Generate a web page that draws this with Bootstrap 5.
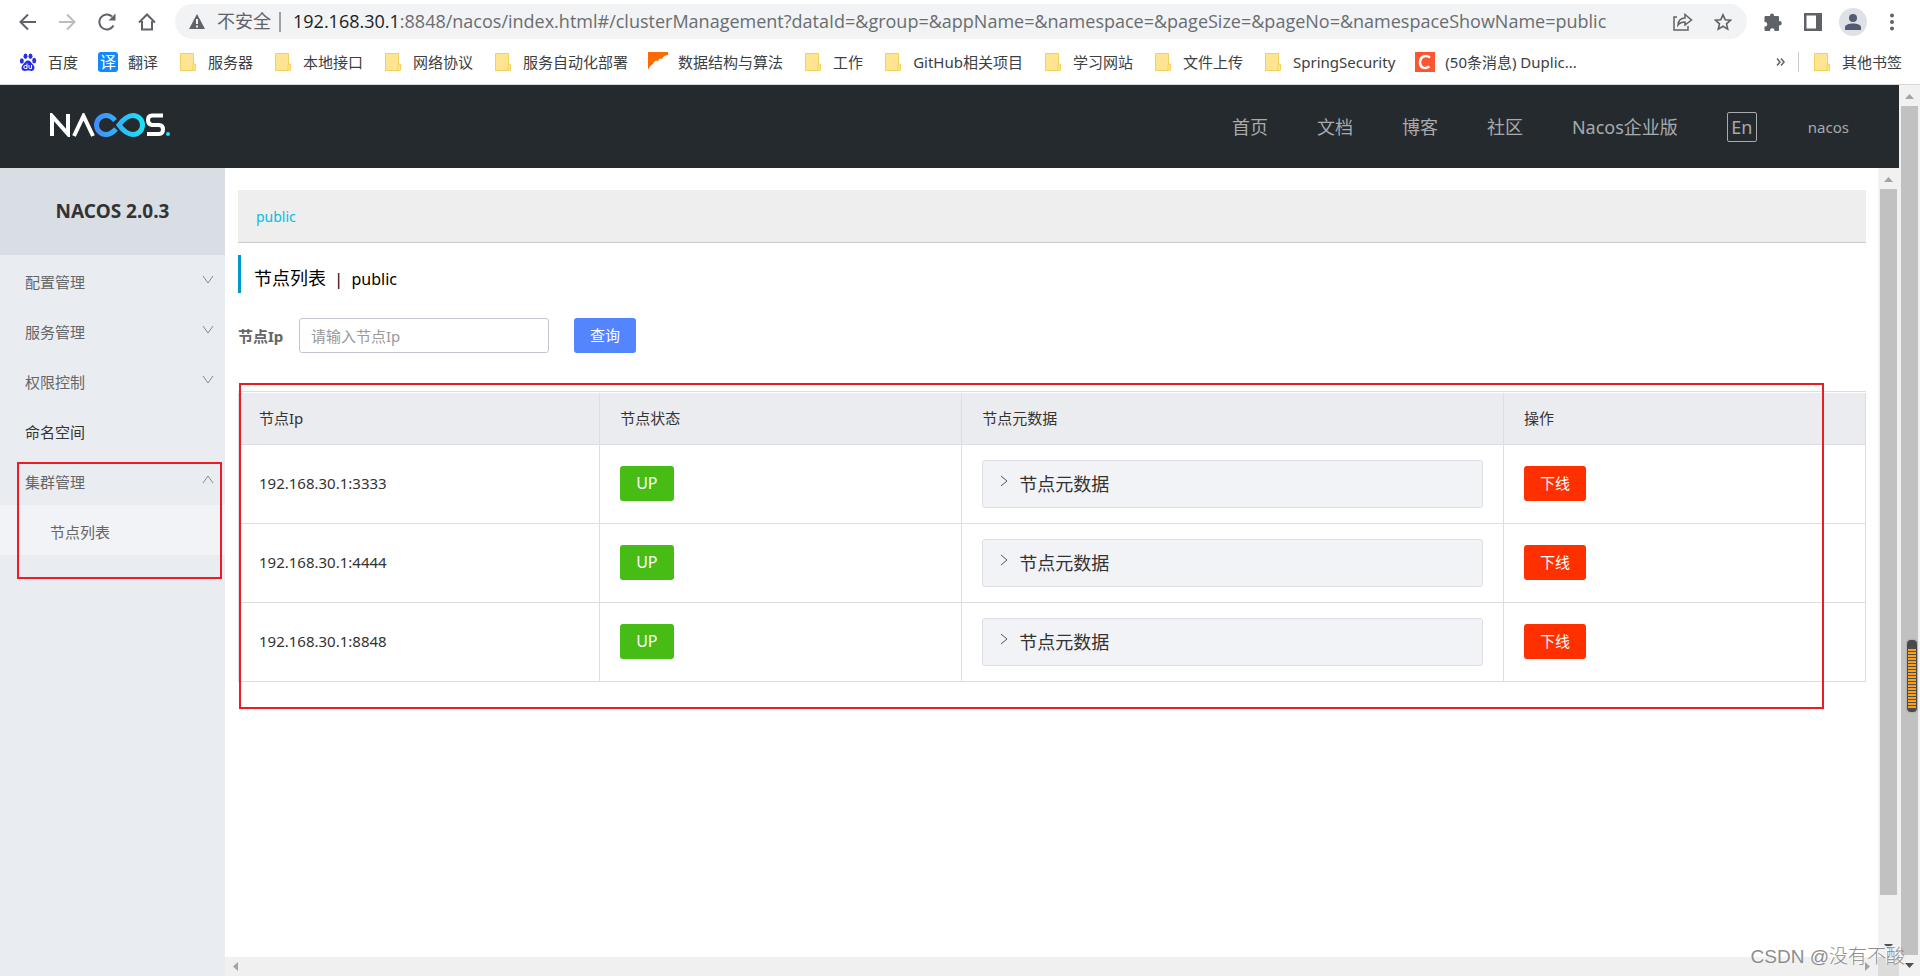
<!DOCTYPE html>
<html lang="zh-CN">
<head>
<meta charset="utf-8">
<meta name="viewport" content="width=device-width, initial-scale=1">
<title>Nacos</title>
<link href="https://cdn.jsdelivr.net/npm/bootstrap@5.3.0/dist/css/bootstrap.min.css" rel="stylesheet">
<style>
  body { font-family: "Noto Sans", "Noto Sans CJK SC", sans-serif; font-size: 15px; line-height: 20px; color: #333; background: #fff; }
  a { color: inherit; text-decoration: none; }
  svg { display: block; flex: none; }

  /* browser toolbar */
  .toolbar { padding: 4px 12px 0 9px; height: 39px; font-family: "Open Sans", "Noto Sans CJK SC", sans-serif; }
  .icon-btn { border: 0; background: none; padding: 0; width: 40px; height: 35px; display: flex; align-items: center; justify-content: center; color: #5f6368; }
  .icon-btn.dim { color: #babcbe; }
  .ib-back { width: 38px; }
  .ib-ext { width: 44px; }
  .ib-panel { width: 35px; }
  .ib-user { width: 46px; }
  .ib-more { width: 32px; }
  .omnibox { height: 35px; border-radius: 18px; background: #f1f3f4; color: #5f6368; padding-left: 14px; margin-left: 8px; font-size: 18px; line-height: 35px; }
  .url-box { white-space: nowrap; color: #6a6d71; }
  .url-box b { font-weight: 400; color: #202124; }
  .url-sep { width: 2px; height: 20px; background: #9aa0a6; margin: 0 12px 0 8px; }
  .profile { width: 28px; height: 28px; border-radius: 50%; background: #dee1e6; display: flex; align-items: center; justify-content: center; }

  .bookmarks { height: 46px; padding: 0 18px; gap: 20px; border-bottom: 1px solid #d5d7d9; color: #3c4043; white-space: nowrap; font-size: 15px; }
  .bookmarks a { display: flex; align-items: center; gap: 10px; }
  .bk-rest { gap: 13px; }
  .fav { width: 20px; height: 20px; }
  .fav-tr { background: #1389fd; color: #fff; border-radius: 3px; text-align: center; font-size: 16px; }
  .bk-sep { width: 1px; height: 20px; background: #c8cacc; }

  /* site header */
  .site-top { background: #252a2f; height: 83px; padding: 0 50px; color: #a8aaac; }
  .site-top nav { gap: 49px; font-size: 18px; }
  .lang { border: 1px solid #a8aaac; border-radius: 2px; background: none; color: inherit; width: 30px; height: 30px; padding: 0; line-height: 26px; font-size: 18px; }
  .user { font-size: 15px; margin-left: 2px; }

  /* side menu */
  .side { width: 225px; background: #e9edf2; flex: none; }
  .side h1 { height: 87px; margin: 0; background: #d9dde4; font-size: 19px; line-height: 86px; font-weight: 700; text-align: center; }
  .side ul { list-style: none; margin: 0; padding: 0; }
  .side li > a { display: flex; align-items: center; justify-content: space-between; height: 50px; padding: 4px 11px 0 25px; color: #666; }
  .side li > a.solid { color: #333; }
  .side li > a svg { margin-bottom: 4px; }
  .side li ul a { background: #f1f3f6; padding-left: 50px; }
  .mark-frame { position: absolute; border: 2px solid #ed1c24; pointer-events: none; }
  .mark-menu { left: 17px; right: 3px; top: 7px; height: 117px; }
  .mark-table { left: 1px; right: 42px; top: -9px; bottom: -27px; }

  /* content */
  .content { padding: 22px 12px 0 13px; min-width: 0; }
  .crumb { height: 53px; background: #eee; border-bottom: 1px solid #ccc; padding: 3px 18px 0; color: #00c1de; font-size: 14px; }
  .crumb a { line-height: 48px; }
  .page-title { margin: 12px 0 25px; height: 38px; border-left: 3px solid #09c; padding: 4px 0 0 13px; font-size: 18px; line-height: 38px; font-weight: 400; color: #000; white-space: pre; }
  .page-title span { font-size: 16px; }
  .search label { font-weight: 700; color: #666; width: 61px; white-space: nowrap; }
  .search input { width: 250px; height: 35px; border: 1px solid #c4c6cf; border-radius: 3px; padding: 0 11px; font-size: 15px; color: #333; }
  .search input::placeholder { color: #999; opacity: 1; }
  .btn-n { display: block; height: 35px; border: 0; border-radius: 3px; padding: 0 16px; color: #fff; font-size: 15px; line-height: 35px; }
  .btn-query { background: #5584ff; margin-left: 25px; }
  .btn-up { background: #46bc15; font-size: 16px; }
  .btn-off { background: #ff3000; }
  .nodes { margin-top: 38px; border-top: 1px solid #dcdee3; padding-top: 1px; }
  .nodes table { width: 100%; table-layout: fixed; border-collapse: collapse; margin: 0; }
  .nodes th, .nodes td { border: 1px solid #dcdee3; padding: 0 20px; text-align: left; font-weight: 400; }
  .nodes th { background: #ebecf0; height: 51px; border-top: 0; }
  .nodes td { height: 79px; }
  .nodes td:first-child { padding-bottom: 2px; }
  .w-ip { width: 22.2%; }
  .w-narrow { width: 22.25%; }
  .meta { width: 100%; height: 48px; border: 1px solid #dcdee3; border-radius: 3px; background: #f2f3f7; color: #333; font-size: 18px; padding: 0 17px; gap: 11px; display: flex; align-items: center; }
  .meta svg { margin-bottom: 6px; }

  /* scroll bars */
  .vbar { width: 21px; flex: none; background: #f1f1f1; padding: 0 2px; display: flex; flex-direction: column; align-items: center; }
  .vbar svg { height: 21px; }
  .vthumb { background: #c1c1c1; width: 17px; }
  .hbar { height: 19px; background: #f0f0f0; padding: 0 8px; }
  .corner { width: 21px; height: 19px; background: #dcdcdc; }
  .gauge { position: absolute; right: 3px; top: 640px; width: 10px; height: 72px; border: 1px solid #4a4a4a; border-radius: 4px; box-shadow: 0 0 2px #888; background: repeating-linear-gradient(#4d4d4d 0 1px, #f9a01f 1px 3px); border-top-width: 8px; border-bottom-width: 3px; }
  .watermark { position: absolute; right: 15px; bottom: 7px; font-size: 19px; line-height: 24px; color: #8d8d8d; text-shadow: -1px -1px 0 #fff; white-space: nowrap; font-family: "Liberation Sans", "Noto Sans CJK SC", sans-serif; font-weight: 300; }
</style>
</head>
<body>
<svg width="0" height="0" class="position-absolute">
  <symbol id="folder" viewBox="0 0 20 20"><path d="M2 2q0-1 1-1h12q1 0 1 1v10h1q1 0 1 1v5q0 1-1 1H3q-1 0-1-1z" fill="#ffe591"/><path d="M15.500 12.500V2q0-.5-.5-.5H3q-.5 0-.5.500v16q0 .5.5.5h13.500q1 0 1-1v-4.500q0-1-1-1h-.5q-1 0-1 1v3q0 2-1 2.500" fill="none" stroke="#f3cf5c"/></symbol>
  <symbol id="down" viewBox="0 0 12 12"><path d="M1 2l5 7 5-7" fill="none" stroke="#888"/></symbol>
  <symbol id="tri-up" viewBox="0 0 17 21"><path d="M4 14h9l-4.500-5z" fill="#a3a3a3"/></symbol>
  <symbol id="tri-down" viewBox="0 0 17 21"><path d="M4 8h9l-4.500 5z" fill="#505050"/></symbol>
</svg>
<div class="d-flex flex-column vh-100 overflow-hidden position-relative">

  <div>
    <div class="toolbar d-flex align-items-center">
      <button class="icon-btn ib-back" aria-label="后退"><svg width="18" height="18" viewBox="0 0 18 18" fill="none" stroke="currentColor" stroke-width="2"><path d="M17 9H2M9 1.500L1.500 9 9 16.500"/></svg></button>
      <button class="icon-btn dim" aria-label="前进"><svg width="18" height="18" viewBox="0 0 18 18" fill="none" stroke="currentColor" stroke-width="2"><path d="M1 9h15M9 1.500L16.500 9 9 16.500"/></svg></button>
      <button class="icon-btn" aria-label="刷新"><svg width="18" height="18" viewBox="0 0 18 18"><path d="M15.500 12.500A7.500 7.500 0 1 1 14 3.500" fill="none" stroke="currentColor" stroke-width="2"/><path d="M17.500 0.500v7h-7z" fill="currentColor"/></svg></button>
      <button class="icon-btn" aria-label="主页"><svg width="18" height="18" viewBox="0 0 18 18"><path d="M4 8v8.500h10V8M1 9.500l8-8 8 8" fill="none" stroke="currentColor" stroke-width="2"/></svg></button>
      <div class="omnibox d-flex align-items-center flex-grow-1">
        <svg width="16" height="16" viewBox="0 0 16 16"><path d="M8 0l8 15H0z" fill="#5f6368"/><path d="M8 5v5M8 11.500v2" stroke="#f1f3f4" stroke-width="2"/></svg>
        <span class="ms-2 ps-1">不安全</span><span class="url-sep"></span>
        <span class="url-box flex-grow-1"><b>192.168.30.1</b>:8848/nacos/index.html#/clusterManagement?dataId=&amp;group=&amp;appName=&amp;namespace=&amp;pageSize=&amp;pageNo=&amp;namespaceShowName=public</span>
        <button class="icon-btn" aria-label="分享"><svg width="20" height="18" viewBox="0 0 20 18" fill="none" stroke="currentColor" stroke-width="1.500"><path d="M4 4H1v13h14v-4M5 12c.5-5 3-7 7-7V1.500l6.500 5.500L12 12V9c-3 0-5 .5-7 3z"/></svg></button>
        <button class="icon-btn me-1" aria-label="收藏"><svg width="18" height="18" viewBox="0 0 18 18" fill="none" stroke="currentColor" stroke-width="1.600"><path d="M9 1.800l2.200 4.900 5.300.5-4 3.600 1.200 5.300L9 13.300l-4.700 2.800 1.200-5.300-4-3.600 5.300-.5z"/></svg></button>
      </div>
      <button class="icon-btn ib-ext ms-1" aria-label="扩展"><svg width="18" height="18" viewBox="0 0 18 18"><path d="M6 2.500a2 2 0 0 1 4 0V3h4q1 0 1 1v4h.5a2 2 0 0 1 0 4.500H15V17q0 1-1 1h-3.500v-.5a2.200 2.200 0 0 0-4.500 0v.5H2q-1.500 0-1.500-1v-3.500H1A2.200 2.200 0 0 0 1 9H.5V4q0-1 1-1H6z" fill="currentColor"/></svg></button>
      <button class="icon-btn ib-panel" aria-label="侧边栏"><svg width="18" height="18" viewBox="0 0 18 18"><path d="M0 0h18v18H0zM2.500 2.500v13H12v-13z" fill="currentColor" fill-rule="evenodd"/></svg></button>
      <button class="icon-btn ib-user" aria-label="用户"><span class="profile"><svg width="16" height="16" viewBox="0 0 16 16" fill="#525c73"><circle cx="8" cy="4" r="4"/><path d="M0 16v-2.500C0 10.500 4 9.500 8 9.500s8 1 8 4V16z"/></svg></span></button>
      <button class="icon-btn ib-more" aria-label="菜单"><svg width="4" height="18" viewBox="0 0 4 18" fill="currentColor"><circle cx="2" cy="2.500" r="2"/><circle cx="2" cy="9" r="2"/><circle cx="2" cy="15.500" r="2"/></svg></button>
    </div>

    <div class="bookmarks d-flex align-items-center">
      <a href="#"><svg class="fav" viewBox="0 0 20 20" fill="#2a2ee0"><ellipse cx="3.800" cy="9" rx="2" ry="2.700"/><ellipse cx="7.500" cy="4.200" rx="2" ry="2.700"/><ellipse cx="12.500" cy="4.200" rx="2" ry="2.700"/><ellipse cx="16.200" cy="8.500" rx="2" ry="2.700"/><path d="M10 8.500c2.500 0 3 2 5 4 3 3 1 6.500-1.500 6.500-1.500 0-2-.4-3.500-.4s-2 .4-3.500.4C4 19 2 15.500 5 12.500c2-2 2.500-4 5-4z"/><path d="M9 11.500v5H7.300a1.500 1.500 0 0 1 0-3H9M11 13v2.500q0 1 1 1h1.500V13" fill="none" stroke="#fff"/></svg>百度</a>
      <a href="#"><span class="fav fav-tr">译</span>翻译</a>
      <a href="#"><svg class="fav"><use href="#folder"/></svg>服务器</a>
      <a href="#"><svg class="fav"><use href="#folder"/></svg>本地接口</a>
      <a href="#"><svg class="fav"><use href="#folder"/></svg>网络协议</a>
      <a href="#"><svg class="fav"><use href="#folder"/></svg>服务自动化部署</a>
      <a href="#"><svg class="fav" viewBox="0 0 20 20"><path d="M0 0h20v3c-3 0-4 1-6 4-2-1-3 0-4 2-3-1-4 1-5 3-2 1-4 3-5 6z" fill="#ff6a00"/></svg>数据结构与算法</a>
      <a href="#"><svg class="fav"><use href="#folder"/></svg>工作</a>
      <a href="#"><svg class="fav"><use href="#folder"/></svg>GitHub相关项目</a>
      <a href="#"><svg class="fav"><use href="#folder"/></svg>学习网站</a>
      <a href="#"><svg class="fav"><use href="#folder"/></svg>文件上传</a>
      <a href="#"><svg class="fav"><use href="#folder"/></svg>SpringSecurity</a>
      <a href="#"><svg class="fav" viewBox="0 0 20 20"><path d="M0 0h20v20H0z" fill="#fc5531"/><path d="M15 5.500C10 2 5 5 5 10.500s5 7 9.500 4" fill="none" stroke="#fff" stroke-width="2.500"/></svg>(50条消息) Duplic...</a>
      <div class="bk-rest d-flex align-items-center ms-auto">
        <button class="icon-btn w-auto" aria-label="更多书签"><svg width="9" height="8" viewBox="0 0 9 8" fill="none" stroke="currentColor" stroke-width="1.500"><path d="M1 .5L4 4 1 7.500M5 .5L8 4 5 7.500"/></svg></button>
        <span class="bk-sep"></span>
        <a href="#"><svg class="fav"><use href="#folder"/></svg>其他书签</a>
      </div>
    </div>
  </div>

  <div class="d-flex flex-grow-1" style="min-height:0">
    <div class="d-flex flex-column flex-grow-1">
      <header class="site-top d-flex align-items-center justify-content-between">
        <a href="#" aria-label="NACOS"><svg width="120" height="24" viewBox="0 0 120 24" class="mb-1" fill="none" stroke="#fff" stroke-width="4">
          <defs><linearGradient id="g" x1="44" y1="0" x2="95" y2="0" gradientUnits="userSpaceOnUse"><stop stop-color="#4389fa"/><stop offset="1" stop-color="#1de3f5"/></linearGradient></defs>
          <path d="M2 23V3L18 21V1M24 23L33.500 3 43 23"/>
          <path d="M66 16Q61 21.500 56 21.500A9.500 9.500 0 0 1 56 2.500Q61 2.500 65 7.500M69 12Q76 2.500 83 2.500a9.500 9.500 0 0 1 0 19Q76 21.500 69 12z" stroke="url(#g)" stroke-width="5"/>
          <path d="M113 2.500h-11q-4 0-4 4.500t4 5h7q4 0 4 4.500t-4 4.500H97"/>
          <circle cx="118" cy="21" r="2" fill="#1de3f5" stroke="none"/></svg></a>
        <nav class="d-flex align-items-center">
          <a href="#">首页</a><a href="#">文档</a><a href="#">博客</a><a href="#">社区</a><a href="#">Nacos企业版</a>
          <button class="lang">En</button>
          <a href="#" class="user">nacos</a>
        </nav>
      </header>

      <div class="d-flex flex-grow-1" style="min-height:0">
        <aside class="side">
          <h1>NACOS 2.0.3</h1>
          <ul>
            <li><a href="#">配置管理<svg width="12" height="12"><use href="#down"/></svg></a></li>
            <li><a href="#">服务管理<svg width="12" height="12"><use href="#down"/></svg></a></li>
            <li><a href="#">权限控制<svg width="12" height="12"><use href="#down"/></svg></a></li>
            <li><a href="#" class="solid">命名空间</a></li>
            <li class="position-relative"><a href="#">集群管理<svg width="12" height="12" viewBox="0 0 12 12"><path d="M1 9l5-7 5 7" fill="none" stroke="#888"/></svg></a>
              <ul><li><a href="#">节点列表</a></li></ul>
              <div class="mark-frame mark-menu"></div>
            </li>
          </ul>
        </aside>

        <div class="d-flex flex-column flex-grow-1" style="min-width:0">
          <div class="d-flex flex-grow-1" style="min-height:0">
            <main class="content flex-grow-1">
              <div class="crumb"><a href="#">public</a></div>
              <h2 class="page-title">节点列表<span>  |  public</span></h2>
              <form class="search d-flex align-items-center">
                <label for="ip">节点Ip</label>
                <input id="ip" type="text" placeholder="请输入节点Ip">
                <button type="button" class="btn-n btn-query">查询</button>
              </form>
              <div class="nodes position-relative">
                <table>
                  <thead><tr><th class="w-ip">节点Ip</th><th class="w-narrow">节点状态</th><th>节点元数据</th><th class="w-narrow">操作</th></tr></thead>
                  <tbody>
                    <tr><td>192.168.30.1:3333</td><td><button class="btn-n btn-up">UP</button></td><td><button class="meta"><svg width="8" height="12" viewBox="0 0 8 12"><path d="M1 1l6 5-6 5" fill="none" stroke="#555"/></svg>节点元数据</button></td><td><button class="btn-n btn-off">下线</button></td></tr>
                    <tr><td>192.168.30.1:4444</td><td><button class="btn-n btn-up">UP</button></td><td><button class="meta"><svg width="8" height="12" viewBox="0 0 8 12"><path d="M1 1l6 5-6 5" fill="none" stroke="#555"/></svg>节点元数据</button></td><td><button class="btn-n btn-off">下线</button></td></tr>
                    <tr><td>192.168.30.1:8848</td><td><button class="btn-n btn-up">UP</button></td><td><button class="meta"><svg width="8" height="12" viewBox="0 0 8 12"><path d="M1 1l6 5-6 5" fill="none" stroke="#555"/></svg>节点元数据</button></td><td><button class="btn-n btn-off">下线</button></td></tr>
                  </tbody>
                </table>
                <div class="mark-frame mark-table"></div>
              </div>
            </main>
            <div class="vbar"><svg width="17"><use href="#tri-up"/></svg><div class="vthumb" style="flex:705"></div><div style="flex:41"></div><svg width="17"><use href="#tri-down"/></svg></div>
          </div>
          <div class="d-flex">
            <div class="hbar flex-grow-1 d-flex justify-content-between align-items-center"><svg width="5" height="9"><path d="M5 0v9L0 4.500z" fill="#a3a3a3"/></svg><svg width="5" height="9"><path d="M0 0v9l5-4.500z" fill="#a3a3a3"/></svg></div>
            <div class="corner"></div>
          </div>
        </div>
      </div>
    </div>
    <div class="vbar"><svg width="17"><use href="#tri-up"/></svg><div class="vthumb flex-grow-1"></div><svg width="17"><use href="#tri-down"/></svg></div>
  </div>

  <div class="gauge"></div>
  <div class="watermark">CSDN @没有不酸</div>
</div>
<script src="https://cdn.jsdelivr.net/npm/bootstrap@5.3.0/dist/js/bootstrap.bundle.min.js"></script>
</body>
</html>
